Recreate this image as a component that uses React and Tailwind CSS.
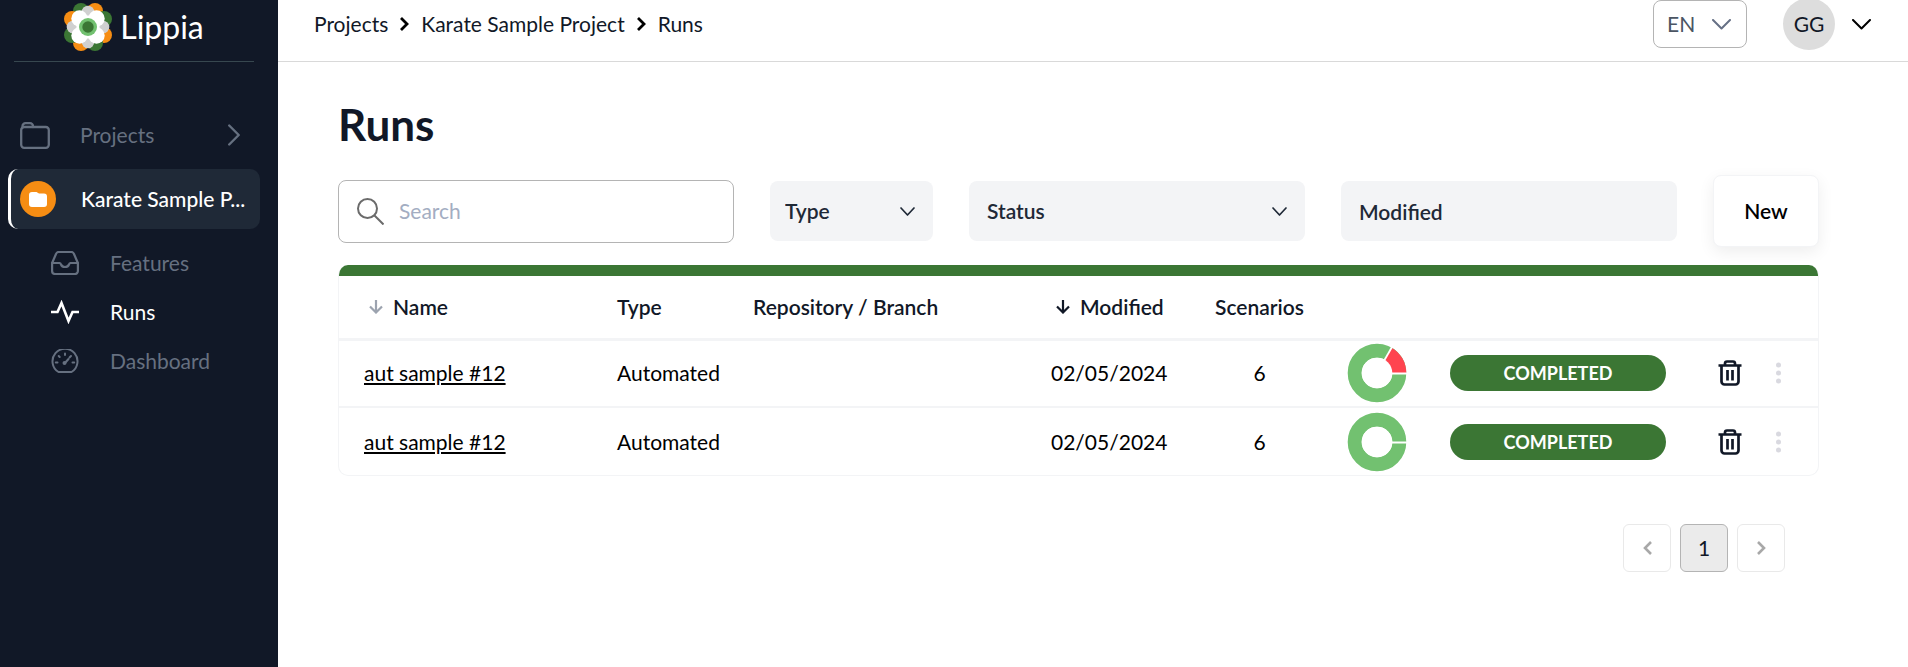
import React from "react";

const runs = [
  { id: 1, name: "aut sample #12", type: "Automated", modified: "02/05/2024", scenarios: 6, failed: 1, status: "COMPLETED" },
  { id: 2, name: "aut sample #12", type: "Automated", modified: "02/05/2024", scenarios: 6, failed: 0, status: "COMPLETED" },
];

function Icon({ className, viewBox = "0 0 24 24", width = 2, children }) {
  return (
    <svg
      className={className}
      viewBox={viewBox}
      fill="none"
      stroke="currentColor"
      strokeWidth={width}
      strokeLinecap="round"
      strokeLinejoin="round"
      aria-hidden="true"
    >
      {children}
    </svg>
  );
}

function Flower() {
  const outer = [
    [-7, -16, "#3b7634"], [7, -16, "#f68d13"], [16, -8, "#3b7634"], [16, 8, "#f68d13"],
    [7, 16, "#3b7634"], [-7, 16, "#f68d13"], [-16, 8, "#3b7634"], [-16, -8, "#f68d13"],
  ];
  return (
    <svg className="size-12 shrink-0" viewBox="-24 -24 48 48" aria-hidden="true">
      {outer.map(([x, y, c]) => <circle key={`${x},${y}`} cx={x} cy={y} r="8" fill={c} />)}
      {[[0, -15], [15, 0], [0, 15], [-15, 0]].map(([x, y]) => (
        <circle key={`${x},${y}`} cx={x} cy={y} r="6.3" fill="#d0d0d0" />
      ))}
      {[[-8.5, -8.5], [8.5, -8.5], [8.5, 8.5], [-8.5, 8.5]].map(([x, y]) => (
        <circle key={`${x},${y}`} cx={x} cy={y} r="8.2" fill="#fff" />
      ))}
      <path d="M0-12 12 0 0 12-12 0Z" fill="#fff" />
      <circle r="9" fill="#72c170" />
      <circle r="5.7" fill="#3b7634" />
    </svg>
  );
}

function Donut({ failed }) {
  return (
    <svg className="mx-auto block size-[60px]" viewBox="-30 -30 60 60" aria-hidden="true">
      <circle r="22.3" fill="none" stroke="#72c170" strokeWidth="14" />
      {failed > 0 && (
        <>
          <path d="M0 0H29.3A29.3 29.3 0 0 0 14.65-25.37Z" fill="#ff444f" />
          <path d="M0 0 15-26" stroke="#fff" strokeWidth="1.8" />
        </>
      )}
      <path d="M0 .5H30" stroke="#fff" strokeWidth="1.8" />
      <circle r="15.3" fill="#fff" />
    </svg>
  );
}

function SubLink({ label, active, children }) {
  return (
    <a
      href="#"
      className={
        active
          ? "flex h-[49px] items-center gap-[31px] pl-[51px] text-white"
          : "flex h-[49px] items-center gap-[31px] pl-[51px] text-[#667080]"
      }
    >
      {children}
      <span>{label}</span>
    </a>
  );
}

function Sidebar() {
  return (
    <aside className="w-[278px] shrink-0 bg-[#111827]">
      <div className="mx-3.5 mr-6 flex h-[62px] items-start justify-center border-b border-[#37474f] pt-[3px]">
        <a href="#" className="flex h-12 items-center gap-2 text-white">
          <Flower />
          <span className="text-[32px] leading-none">Lippia</span>
        </a>
      </div>
      <nav className="pt-[46px]">
        <a href="#" className="flex h-[54px] items-center pl-5 pr-[38px] text-[#667080]">
          <Icon className="h-[27px] w-[30px] shrink-0" viewBox="0 0 30 27" width={2.3}>
            <rect x="1.2" y="5" width="27.6" height="20.800" rx="3" />
            <path d="M2.500 5.500V4.200a3 3 0 0 1 3-3h4.500a3 3 0 0 1 3 3v.8" />
          </Icon>
          <span className="ml-[30px] flex-1">Projects</span>
          <Icon className="h-[22px] w-3" viewBox="0 0 12 22" width={2.4}><path d="m1.200 1.500 9.500 9.500-9.500 9.500" /></Icon>
        </a>
        <a
          href="#"
          className="ml-2 mr-[18px] mt-[7px] flex h-[60px] items-center rounded-[10px] border-l-3 border-white bg-[#1f2937] pl-[9px] pr-2 font-medium text-white"
        >
          <span className="flex size-9 shrink-0 items-center justify-center rounded-full bg-[#f68d13]">
            <svg className="h-[15px] w-[18px]" viewBox="0 0 18 15" fill="#fff" aria-hidden="true">
              <path d="M3 0h4.500l2.500 1.500H15a3 3 0 0 1 3 3V12a3 3 0 0 1-3 3H3a3 3 0 0 1-3-3V3a3 3 0 0 1 3-3Z" />
            </svg>
          </span>
          <span className="ml-[25px] whitespace-nowrap">Karate Sample P...</span>
        </a>
        <div className="pt-[9px]">
          <SubLink label="Features">
            <Icon className="h-6 w-7" viewBox="0 0 28 24" width={2.2}>
              <path d="M1.100 12v8a3 3 0 0 0 3 3h19.800a3 3 0 0 0 3-3v-8L23 3a3 3 0 0 0-3-2H8a3 3 0 0 0-3 2Z" />
              <path d="M1.100 12h7.400a2 2 0 0 1 1.500 1.500c.8 2 1.500 2.500 4 2.500s3.200-.5 4-2.500a2 2 0 0 1 1.500-1.500H26.900" />
            </Icon>
          </SubLink>
          <SubLink label="Runs" active>
            <svg className="h-6 w-7" viewBox="0 0 28 24" fill="none" stroke="currentColor" strokeWidth="2.600" aria-hidden="true">
              <path d="M0 12h6.500l4-9 7 18 4-9H28" />
            </svg>
          </SubLink>
          <SubLink label="Dashboard">
            <Icon className="h-6 w-7" viewBox="0 0 28 24" width={2}>
              <path d="M7.500 23h13a12.500 12.500 0 1 0-13 0Z" />
              <path d="M14 4.500v1.500M7.700 7l1 1M4.800 13.500h1.700M21.500 13.500h1.700M18.500 8.500l1.500-1.500" />
              <path d="M14 14l3.500-4" />
              <circle cx="13.500" cy="14" r="1" fill="currentColor" />
            </Icon>
          </SubLink>
        </div>
      </nav>
    </aside>
  );
}

function CrumbArrow() {
  return (
    <svg className="h-3.5 w-[9px] text-black" viewBox="0 0 9 14" fill="none" stroke="currentColor" strokeWidth="2.800" aria-hidden="true">
      <path d="m1 1 6 6-6 6" />
    </svg>
  );
}

function Topbar() {
  return (
    <header className="flex h-[62px] items-start justify-between border-b border-[#d9d9d9] pl-9 pr-[37px]">
      <nav aria-label="Breadcrumb" className="flex h-12 items-center gap-3">
        <a href="#">Projects</a>
        <CrumbArrow />
        <a href="#">Karate Sample Project</a>
        <CrumbArrow />
        <a href="#">Runs</a>
      </nav>
      <div className="flex items-center">
        <div className="relative text-[#4b5563]">
          <select aria-label="Language" className="block h-12 w-[94px] appearance-none rounded-lg border border-[#b4b4b4] bg-white pl-[13px]">
            <option>EN</option>
          </select>
          <Icon className="pointer-events-none absolute right-4 top-[19px] h-[11px] w-[19px] text-[#667085]" viewBox="0 0 19 11">
            <path d="m1 1 8.500 8.500L18 1" />
          </Icon>
        </div>
        <button type="button" aria-label="Account" className="ml-9 flex h-12 items-center gap-[17px]">
          <span className="flex size-[52px] items-center justify-center rounded-full bg-[#dddddd]">GG</span>
          <Icon className="h-[11px] w-[19px] text-black" viewBox="0 0 19 11"><path d="m1 1 8.500 8.500L18 1" /></Icon>
        </button>
      </div>
    </header>
  );
}

function Filter({ label, className, selectClassName }) {
  return (
    <div className={className}>
      <select aria-label={label} className={selectClassName}>
        <option>{label}</option>
      </select>
      <Icon className="pointer-events-none absolute right-[18px] top-[26px] h-[9px] w-[15px] text-[#1f2937]" viewBox="0 0 15 9" width={1.7}>
        <path d="m1 1 6.500 7L14 1" />
      </Icon>
    </div>
  );
}

function SortArrow({ className }) {
  return (
    <svg className={className} viewBox="0 0 14 14" fill="none" stroke="currentColor" strokeWidth="2.200" aria-hidden="true">
      <path d="M7 0v12M1 6.500l6 6 6-6" />
    </svg>
  );
}

function RunsTable() {
  return (
    <div className="mt-[18px] overflow-hidden rounded-[10px] border border-t-0 border-[#f3f4f6]">
      <div className="-mx-px h-[11px] bg-[#3b7634]" />
      <table className="w-full table-fixed border-collapse text-left">
        <colgroup>
          <col className="w-[278px]" />
          <col className="w-[136px]" />
          <col />
          <col className="w-[134px]" />
          <col className="w-[149px]" />
          <col className="w-[86px]" />
          <col className="w-[276px]" />
          <col className="w-[68px]" />
          <col className="w-[54px]" />
        </colgroup>
        <thead>
          <tr className="h-[63px] border-b-3 border-[#f3f4f6]">
            <th className="pl-[30px] font-semibold">
              <button type="button" className="flex items-center gap-2.5">
                <SortArrow className="size-3.5 text-[#9ca3af]" />
                Name
              </button>
            </th>
            <th className="font-semibold">Type</th>
            <th className="font-semibold">Repository / Branch</th>
            <th className="pl-[5px] font-semibold">
              <button type="button" className="flex items-center gap-2.5">
                <SortArrow className="size-3.5" />
                Modified
              </button>
            </th>
            <th className="text-center font-semibold">Scenarios</th>
            <th /><th /><th /><th />
          </tr>
        </thead>
        <tbody className="text-black">
          {runs.map((run) => (
            <tr key={run.id} className="h-[68px] border-[#f3f4f6] not-last:border-b-2">
              <td className="pl-[25px]">
                <a href="#" className="underline decoration-2 underline-offset-2">{run.name}</a>
              </td>
              <td>{run.type}</td>
              <td />
              <td>{run.modified}</td>
              <td className="text-center">{run.scenarios}</td>
              <td><Donut failed={run.failed} /></td>
              <td>
                <span className="mx-auto flex h-9 w-[216px] items-center justify-center rounded-full bg-[#3b7634] text-[18px] font-bold text-white">
                  {run.status}
                </span>
              </td>
              <td>
                <button type="button" aria-label="Delete run" className="mx-auto block text-[#111827]">
                  <svg className="h-[26px] w-6" viewBox="0 0 24 26" fill="none" stroke="currentColor" strokeWidth="2.700" strokeLinejoin="round" aria-hidden="true">
                    <path d="M0.500 5.500H23.500M3.500 5.500V21.500a3 3 0 0 0 3 3h11a3 3 0 0 0 3-3V5.500M7 5V3.500a2 2 0 0 1 2-2h6a2 2 0 0 1 2 2V5M9.500 10v10.500M14.500 10v10.500" />
                  </svg>
                </button>
              </td>
              <td className="pl-3">
                <button type="button" aria-label="More actions" className="block text-[#d9d9e0]">
                  <svg className="h-6 w-[5px]" viewBox="0 0 5 24" fill="currentColor" aria-hidden="true">
                    <circle cx="2.500" cy="4" r="2.500" /><circle cx="2.500" cy="12" r="2.500" /><circle cx="2.500" cy="20" r="2.500" />
                  </svg>
                </button>
              </td>
            </tr>
          ))}
        </tbody>
      </table>
    </div>
  );
}

function PageArrow({ d }) {
  return (
    <svg className="h-3.5 w-[9px]" viewBox="0 0 9 14" fill="none" stroke="currentColor" strokeWidth="2.600" aria-hidden="true">
      <path d={d} />
    </svg>
  );
}

export default function App() {
  return (
    <div className="flex min-h-screen bg-white font-['Lato',sans-serif] text-[21px] leading-7 text-[#111827]">
      <Sidebar />
      <div className="min-w-0 flex-1">
        <Topbar />
        <main className="pb-16 pl-[60px] pr-[89px] pt-[37px]">
          <h1 className="text-[44px] font-bold leading-[50px]">Runs</h1>
          <div className="mt-[26px] flex h-[72px] items-center">
            <label className="flex h-[63px] min-w-[300px] flex-1 items-center gap-[15px] rounded-lg border border-[#b4b4b4] px-[18px]">
              <svg className="size-[27px] shrink-0 text-[#6b6b6b]" viewBox="0 0 27 27" fill="none" stroke="currentColor" strokeWidth="2" aria-hidden="true">
                <circle cx="10.500" cy="10.500" r="9.500" /><path d="m17 17 9.500 9.500" />
              </svg>
              <input type="search" aria-label="Search" placeholder="Search" className="w-full min-w-0 outline-none placeholder:text-[#a3adc2]" />
            </label>
            <Filter
              label="Type"
              className="relative ml-9 w-[163px]"
              selectClassName="block h-[60px] w-full appearance-none rounded-lg bg-[#f3f4f6] px-[15px] font-semibold text-[#1f2937]"
            />
            <Filter
              label="Status"
              className="relative ml-9 w-[336px]"
              selectClassName="block h-[60px] w-full appearance-none rounded-lg bg-[#f3f4f6] px-[18px] font-semibold text-[#1f2937]"
            />
            <input aria-label="Modified" placeholder="Modified" className="ml-9 h-[60px] w-[336px] rounded-lg bg-[#f3f4f6] px-[18px] font-semibold placeholder:text-[#1f2937]" />
            <button type="button" className="ml-9 h-[72px] w-[106px] rounded-lg border border-[#f3f4f6] bg-white font-semibold text-black shadow-[0_5px_16px_rgba(0,0,0,0.07)]">
              New
            </button>
          </div>
          <RunsTable />
          <nav aria-label="Pagination" className="mr-[34px] mt-12 flex justify-end gap-[9px]">
            <button type="button" aria-label="Previous page" className="flex size-12 items-center justify-center rounded-md border border-[#e9e9e9] text-[#a8a8a8]">
              <PageArrow d="m8 1-6 6 6 6" />
            </button>
            <button type="button" aria-current="page" className="size-12 rounded-md border border-[#b4b4b4] bg-[#ebebeb]">1</button>
            <button type="button" aria-label="Next page" className="flex size-12 items-center justify-center rounded-md border border-[#e9e9e9] text-[#a8a8a8]">
              <PageArrow d="m1 1 6 6-6 6" />
            </button>
          </nav>
        </main>
      </div>
    </div>
  );
}
